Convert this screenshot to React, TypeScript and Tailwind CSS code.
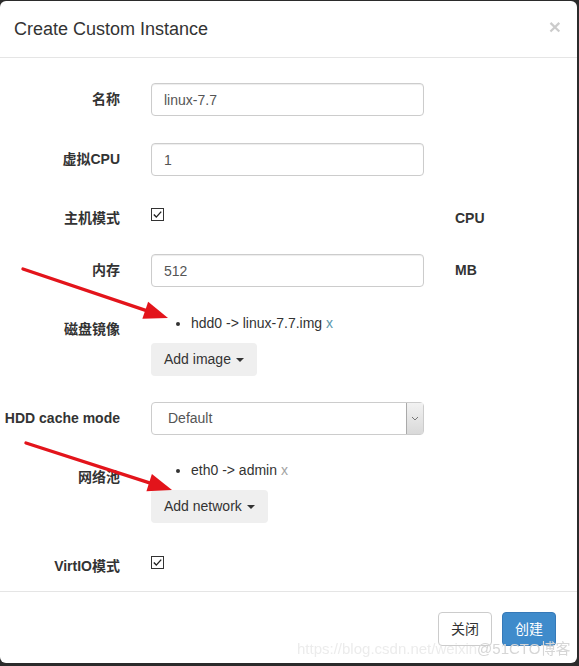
import React from 'react';

const font = { fontFamily: '"Liberation Sans", "Noto Sans CJK SC", Arial, sans-serif' };

function Label({ children, className = '' }: { children: React.ReactNode; className?: string }) {
  return (
    <div className={`w-[120px] shrink-0 text-right text-[14px] font-bold text-[#333] ${className}`}>
      {children}
    </div>
  );
}

function TextInput({ value }: { value: string }) {
  return (
    <input
      readOnly
      defaultValue={value}
      className="h-[33px] w-[273px] rounded-[4px] border border-[#ccc] bg-white px-[12px] text-[14px] text-[#555] shadow-[inset_0_1px_1px_rgba(0,0,0,0.075)] outline-none"
    />
  );
}

function Checkbox() {
  return (
    <svg width="13" height="13" viewBox="0 0 13 13" className="block">
      <rect x="0.5" y="0.5" width="12" height="12" fill="#fff" stroke="#333" />
      <path d="M2.8 6.6 L5.3 9.1 L10.2 3.6" fill="none" stroke="#222" strokeWidth="1.4" />
    </svg>
  );
}

function Caret() {
  return (
    <span className="ml-[5px] inline-block h-0 w-0 border-x-[4px] border-t-[4px] border-x-transparent border-t-[#333] align-middle" />
  );
}

function DropButton({ label }: { label: string }) {
  return (
    <button className="mt-[10px] flex h-[33px] items-center rounded-[4px] bg-[#efefef] px-[13px] text-[14px] text-[#333]">
      {label}
      <Caret />
    </button>
  );
}

function Arrow({ x1, y1, x2, y2 }: { x1: number; y1: number; x2: number; y2: number }) {
  const dx = x2 - x1;
  const dy = y2 - y1;
  const len = Math.sqrt(dx * dx + dy * dy);
  const ux = dx / len;
  const uy = dy / len;
  const bx = x2 - 24 * ux;
  const by = y2 - 24 * uy;
  const px = -uy * 9;
  const py = ux * 9;
  return (
    <g>
      <line x1={x1} y1={y1} x2={bx + 2 * ux} y2={by + 2 * uy} stroke="#e3141b" strokeWidth="3.4" strokeLinecap="round" />
      <polygon points={`${x2},${y2} ${bx + px},${by + py} ${bx - px},${by - py}`} fill="#e3141b" />
    </g>
  );
}

export default function App() {
  return (
    <div className="relative h-[666px] w-[579px] overflow-hidden bg-[#2b2b2b]" style={font}>
      <div className="mt-[1px] flex h-[662px] w-[577px] flex-col rounded-[6px] bg-white">
        {/* header */}
        <div className="flex h-[57px] shrink-0 items-center justify-between border-b border-[#e5e5e5] pl-[14px] pr-[16px]">
          <h4 className="text-[18px] text-[#333]">Create Custom Instance</h4>
          <span className="-mt-[6px] text-[21px] font-bold leading-none text-black opacity-20">×</span>
        </div>

        {/* body */}
        <div className="flex flex-col pb-[8px] pt-[25px]">
          <div className="flex h-[33px] items-center">
            <Label>名称</Label>
            <div className="ml-[31px]">
              <TextInput value="linux-7.7" />
            </div>
          </div>

          <div className="mt-[27px] flex h-[33px] items-center">
            <Label>虚拟CPU</Label>
            <div className="ml-[31px]">
              <TextInput value="1" />
            </div>
          </div>

          <div className="mt-[26px] flex h-[33px] items-center">
            <Label>主机模式</Label>
            <div className="ml-[31px] h-[33px] w-[273px] pt-[6px]">
              <Checkbox />
            </div>
            <span className="ml-[31px] text-[14px] font-bold text-[#333]">CPU</span>
          </div>

          <div className="mt-[19px] flex h-[33px] items-center">
            <Label>内存</Label>
            <div className="ml-[31px]">
              <TextInput value="512" />
            </div>
            <span className="ml-[31px] text-[14px] font-bold text-[#333]">MB</span>
          </div>

          <div className="mt-[26px] flex items-start">
            <Label className="pt-[6px] leading-[20px]">磁盘镜像</Label>
            <div className="ml-[31px] flex flex-col items-start">
              <ul className="list-disc pl-[40px] text-[14px] leading-[20px] text-[#333]">
                <li>
                  hdd0 -&gt; linux-7.7.img <span className="text-[#5b97ad]">x</span>
                </li>
              </ul>
              <DropButton label="Add image" />
            </div>
          </div>

          <div className="mt-[26px] flex h-[33px] items-center">
            <Label>HDD cache mode</Label>
            <div className="ml-[31px] flex h-[33px] w-[273px] items-stretch rounded-[4px] border border-[#ccc] bg-white">
              <span className="flex flex-1 items-center pl-[16px] text-[14px] text-[#555]">Default</span>
              <span className="flex w-[17px] items-center justify-center border-l border-[#aaa] bg-gradient-to-b from-[#f2f2f2] to-[#d9d9d9]">
                <svg width="8" height="5" viewBox="0 0 8 5">
                  <path d="M1 1 L4 4 L7 1" fill="none" stroke="#777" strokeWidth="1" />
                </svg>
              </span>
            </div>
          </div>

          <div className="mt-[25px] flex items-start">
            <Label className="pt-[7px] leading-[20px]">网络池</Label>
            <div className="ml-[31px] flex flex-col items-start">
              <ul className="list-disc pl-[40px] text-[14px] leading-[20px] text-[#333]">
                <li>
                  eth0 -&gt; admin <span className="text-[#a3a3a3]">x</span>
                </li>
              </ul>
              <DropButton label="Add network" />
            </div>
          </div>

          <div className="mt-[27px] flex h-[33px] items-center">
            <Label>VirtIO模式</Label>
            <div className="ml-[31px] h-[33px] pt-[6px]">
              <Checkbox />
            </div>
          </div>
        </div>

        {/* footer */}
        <div className="flex flex-1 justify-end gap-[10px] border-t border-[#e5e5e5] pr-[21px] pt-[20px]">
          <button className="h-[34px] w-[54px] rounded-[4px] border border-[#ccc] bg-white text-[14px] text-[#333]">
            关闭
          </button>
          <button className="h-[34px] w-[54px] rounded-[4px] border border-[#3579b8] bg-[#3f8bcb] text-[14px] text-white">
            创建
          </button>
        </div>
      </div>

      {/* watermark */}
      <div className="pointer-events-none absolute left-[297px] top-[638px] whitespace-nowrap text-[15px] text-[#ececec] blur-[0.4px]">
        https://blog.csdn.net/weixin<span className="text-[#d6d6d6]">@51CTO博客</span>
      </div>

      {/* annotation arrows */}
      <svg className="pointer-events-none absolute left-0 top-0" width="579" height="666">
        <Arrow x1={23} y1={269} x2={168} y2={318} />
        <Arrow x1={26} y1={443} x2={172} y2={490} />
      </svg>
    </div>
  );
}
